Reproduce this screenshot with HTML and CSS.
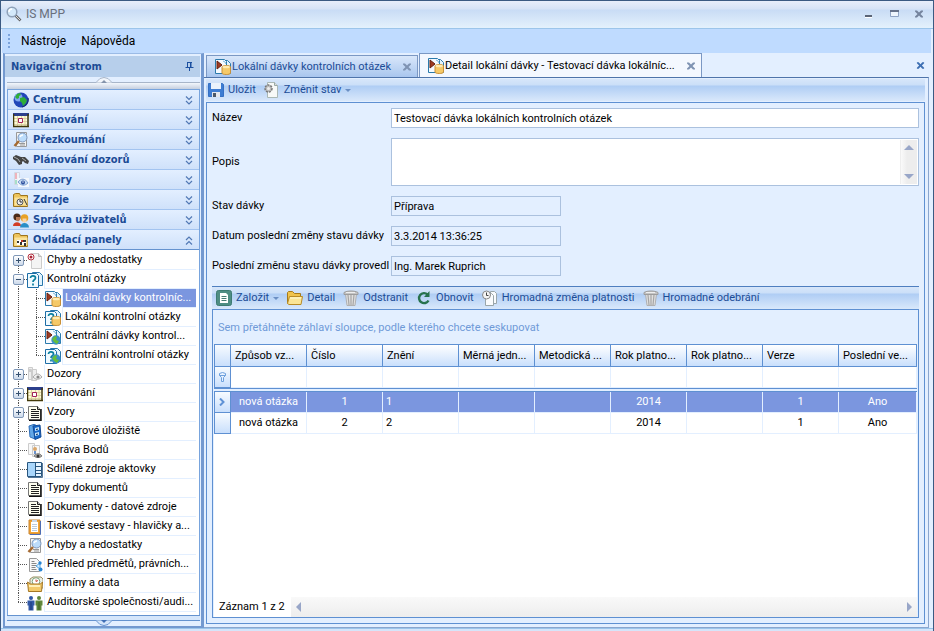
FILE: index.html
```html
<!DOCTYPE html>
<html lang="cs">
<head>
  <meta charset="UTF-8" />
  <meta name="viewport" content="width=device-width, initial-scale=1" />
  <title>IS MPP</title>
  <link rel="stylesheet" href="styles.css">
</head>
<body>
  <!-- Icon set -->
  <svg class="sprite" aria-hidden="true">
    <symbol id="i-search" viewBox="0 0 16 16"><path d="M9.500 9.500l5 5" stroke="#666" stroke-width="2.600"/><path d="M9.500 9.500l4.600 4.600" stroke="#ddd" stroke-width="1"/><circle cx="6" cy="6" r="4.800" fill="#d4e9fa" stroke="#8fa1b8" stroke-width="1.500"/><path d="M3 6a3 3 0 0 1 3-3" stroke="#fff" fill="none" stroke-width="1.500"/></symbol>
    <symbol id="i-globe" viewBox="0 0 16 16"><circle cx="8" cy="8" r="7.500" fill="#2146b8"/><circle cx="5.500" cy="5.500" r="4" fill="#7fa8f0"/><path d="M2 5l2-3 3-1 1 2-2 1 0 2-2 1zM7 6l4-1 3 3-1 3-3 3-1-3-2-2z" fill="#2fae37"/><path d="M9 15a7.500 7.500 0 0 0 6-9" fill="none" stroke="#172a70" stroke-width="1.200"/></symbol>
    <symbol id="i-cal" viewBox="0 0 16 16"><path d="M0 1h16v3H0z" fill="#2c3f8c"/><path d="M1 4h13v10H1z" fill="#fffbd6"/><path d="M1 6.500h13M1 9.500h13M1 12.500h13M4.500 4v10M8.500 4v10M12 4v10" stroke="#d5cc98" stroke-width="0.800"/><path d="M0.500 2v12.500M15 2v13M0 14.500h16" stroke="#423808" stroke-width="1.500"/><path d="M5.500 6.500h4v4h-4z" fill="#fff" stroke="#a22058"/></symbol>
    <symbol id="i-inspect" viewBox="0 0 16 16"><path d="M3.500 0.500h10v14h-10z" fill="#f5f5f5" stroke="#999"/><path d="M6 11.500h6M7 13h5" stroke="#999"/><path d="M6 9l-4.500 5" stroke="#a56a32" stroke-width="2.500"/><circle cx="9.500" cy="5.500" r="4.500" fill="#bcdcfb" stroke="#7f97bb"/><path d="M7 5a3 3 0 0 1 3-2" fill="none" stroke="#fff" stroke-width="1.500"/></symbol>
    <symbol id="i-bino" viewBox="0 0 16 16"><path d="M0 5l3-2 5 2 4 0 4 4-1 3-3-1-2-2-1 1 0 2-3 1-3-4-3-2z" fill="#444"/><path d="M1 5l4 2 2 3M9 6l4 3" stroke="#aaa" stroke-width="1" fill="none"/></symbol>
    <symbol id="i-eye" viewBox="0 0 16 16"><path d="M1.500 0.500h5v12h-5z" fill="#eef2f8" stroke="#d0d8e4"/><path d="M2 1h2v6H2z" fill="#efb3bb"/><path d="M2 8h2v4H2z" fill="#a8dfc8"/><path d="M5 6h11v9H5z" fill="#f4f8fd"/><path d="M5 10c3-4 7-4 10 1-3 3-7 3-10-1z" fill="#c5daf3" stroke="#7f9fd0"/><circle cx="10" cy="10.500" r="2" fill="#2b4f9e"/><circle cx="10" cy="10" r="0.700" fill="#fff"/></symbol>
    <symbol id="i-eyegray" viewBox="0 0 16 16"><path d="M1.500 0.500h4v12h-4zM4.500 2.500h5v11h-5z" fill="#eee" stroke="#ccc"/><path d="M2 2h2v3H2z" fill="#ccc"/><path d="M6 10c3-4 6-4 9 0-3 3-6 3-9 0z" fill="#f0f0f0" stroke="#aaa"/><circle cx="11" cy="10" r="1.600" fill="#888"/></symbol>
    <symbol id="i-folderclk" viewBox="0 0 16 16"><path d="M0.500 14.500v-12l2-1h4l1 2h7v11z" fill="#edc45c" stroke="#9d741d"/><path d="M1.500 13.500v-8h13v8z" fill="#fae39a"/><circle cx="7" cy="10" r="3" fill="#eee" stroke="#555"/><path d="M7 8v2h2M11 7l3 6" stroke="#333" fill="none"/></symbol>
    <symbol id="i-foldertool" viewBox="0 0 16 16"><path d="M0.500 14.500v-12l2-1h4l1 2h7v11z" fill="#edc45c" stroke="#9d741d"/><path d="M1.500 13.500v-8h13v8z" fill="#fae39a"/><path d="M4 8h9v5H4z" fill="#fff"/><path d="M4 9h2v2H4zM7 10h2v3H7zM10 8h3v2h-3zM11 11h2v3h-2z" fill="#333"/><path d="M8 8h2v2H8z" fill="#c03724"/></symbol>
    <symbol id="i-users" viewBox="0 0 16 16"><path d="M0 14c0-5 8-5 8 0z" fill="#d33d25"/><circle cx="4" cy="5" r="3.600" fill="#4b2a17"/><path d="M3 5h4v3l-2 1.500-2-1.500z" fill="#b87850"/><path d="M7 15.500c0-6 9-6 9 0z" fill="#298ec6"/><circle cx="11.500" cy="6" r="3.800" fill="#e8a226"/><path d="M9.500 6.500h4v3l-2 1.500-2-1.500z" fill="#fad3a3"/></symbol>
    <symbol id="i-err" viewBox="0 0 16 16"><path d="M4.500 0.500h7l3 3v12h-10z" fill="#f4f4f4" stroke="#ccc"/><path d="M11.500 0.500v3h3" fill="#ddd" stroke="#bbb"/><circle cx="4" cy="4" r="3" fill="#fff" stroke="#b63342"/><circle cx="4" cy="4" r="1.500" fill="#a92636"/></symbol>
    <symbol id="i-page-q" viewBox="0 0 16 16"><path d="M5.500 0.500h7l3 3v10h-10z" fill="#e2f3fd" stroke="#2877ab"/><path d="M0.500 1.500h9l2 2v12h-11z" fill="#f0faff" stroke="#1d6da6"/><path d="M3.500 6c0-3 5-2.500 5 0 0 2-2.500 1.500-2.500 4M6 11.500v2" fill="none" stroke="#087d9d" stroke-width="1.700"/></symbol>
    <symbol id="i-arrowpage" viewBox="0 0 16 16"><path d="M5.500 1.500h7l3 3v10h-10z" fill="#e2f3fd" stroke="#2b7aac"/><path d="M0.500 0.500h9l2 2v12h-11z" fill="#f5faff" stroke="#2b7aac"/><path d="M8 2l2 1 1 2" fill="none" stroke="#7ab9dc"/><path d="M2 2l5 4-5 4z" fill="#a03a20" stroke="#642010"/></symbol>
    <symbol id="i-db" viewBox="0 0 16 16"><path d="M7 8c0-2 8.500-2 8.500 0v6c0 2-8.500 2-8.500 0z" fill="#f5c968" stroke="#c99038"/><ellipse cx="11.200" cy="8" rx="3.700" ry="1.300" fill="#ffebb1"/></symbol>
    <symbol id="i-miniglobe" viewBox="0 0 16 16"><circle cx="11" cy="11" r="4.700" fill="#3b8fc8"/><path d="M7 10l3-3 2 1-1 3 3 1-2 3-3-2z" fill="#65bf3b"/></symbol>
    <symbol id="i-lokdavka" viewBox="0 0 16 16"><use href="#i-arrowpage"/><use href="#i-db"/></symbol>
    <symbol id="i-lokotazka" viewBox="0 0 16 16"><use href="#i-page-q"/><use href="#i-db"/></symbol>
    <symbol id="i-cendavka" viewBox="0 0 16 16"><use href="#i-arrowpage"/><use href="#i-miniglobe"/></symbol>
    <symbol id="i-cenotazka" viewBox="0 0 16 16"><use href="#i-page-q"/><use href="#i-miniglobe"/></symbol>
    <symbol id="i-doc" viewBox="0 0 16 16"><path d="M1.500 1.500h9l3 3v10h-12z" fill="#fffff0" stroke="#777"/><path d="M14 4v11.500H2" stroke="#111" fill="none" stroke-width="1.500"/><path d="M10.500 1.500v3h3" fill="#bbb" stroke="#222"/><path d="M4 4.500h5M4 6.500h8M4 8.500h8M4 10.500h8M4 12.500h8" stroke="#222"/></symbol>
    <symbol id="i-store" viewBox="0 0 16 16"><path d="M2 2l6-2v15l-5-2z" fill="#62a7e7" stroke="#326fb8"/><path d="M6 2l7-1 1 12-6 2.500z" fill="#1668c9" stroke="#124a96"/><path d="M8 4l4-1v3l-4 1zM8 9l4-1v3l-4 1z" fill="#c8e5fb"/><path d="M9 5.500l2-0.400M9 10.500l2-0.400" stroke="#17355c"/></symbol>
    <symbol id="i-points" viewBox="0 0 16 16"><path d="M1.500 0.500h6v11h-6zM5.500 2.500h7v11h-7z" fill="#f8f8f8" stroke="#ccc"/><circle cx="8" cy="6" r="2" fill="#dba769"/><path d="M7 8h2v3H7z" fill="#6b92ca"/><path d="M7 13c2-3 6-3 8 0-2 2-6 2-8 0z" fill="#aaa" stroke="#777"/><circle cx="11" cy="13" r="1.500" fill="#333"/></symbol>
    <symbol id="i-list" viewBox="0 0 16 16"><path d="M0.500 0.500h14v14H0.500z" fill="#e7f4ff" stroke="#28567f"/><path d="M1 1h7v13H1z" fill="#a9d6fb"/><path d="M8.500 1v13M9 4.500h6M9 8.500h6M9 11.500h6" stroke="#28567f"/><path d="M15.500 1v14.500H1" stroke="#557799" fill="none"/></symbol>
    <symbol id="i-report" viewBox="0 0 16 16"><path d="M2 1h11v14H2z" fill="#f2a333" stroke="#c98530"/><path d="M4 3h7v10H4z" fill="#fff"/><path d="M5 1h5v2H5z" fill="#ccd8e8"/><path d="M5 5.500h5M5 7.500h5M5 9.500h5M5 11.500h5" stroke="#b9cadf"/><path d="M13.500 2v13.500H3" fill="none" stroke="#4d6db4"/></symbol>
    <symbol id="i-law" viewBox="0 0 16 16"><path d="M2.500 1.500h7l3 3v10h-10z" fill="#f8f8f8" stroke="#999"/><path d="M4.500 4.500h3M4.500 6.500h5M4.500 8.500h5M4.500 10.500h4M4.500 12.500h5" stroke="#888"/><path d="M9 9l4-3v6z" fill="#d7edff" stroke="#59a5de"/><circle cx="13" cy="6" r="1.700" fill="#2986d5"/><circle cx="13.500" cy="12.500" r="2" fill="#2986d5"/></symbol>
    <symbol id="i-term" viewBox="0 0 16 16"><path d="M3 3l3-2h8l2 2v9H3z" fill="#e9efe6" stroke="#9b8e61"/><circle cx="9" cy="5.500" r="3.800" fill="#fff" stroke="#7fa47d"/><path d="M9 3.500v2l2-1" stroke="#c34b37" fill="none"/><path d="M0.500 6l3 2h10l2-2-1 9.500h-13z" fill="#f3ca6b" stroke="#a57724"/><path d="M2 10h11" stroke="#fff0b9" stroke-width="2"/></symbol>
    <symbol id="i-people" viewBox="0 0 16 16"><circle cx="4" cy="3" r="2" fill="#3158a6"/><path d="M0.500 5.500h7v5h-1v5h-5v-5h-1z" fill="#3158a6"/><path d="M4 7v8" stroke="#1e3b79"/><circle cx="12" cy="3" r="2" fill="#5f873b"/><path d="M8.500 5.500h7v5h-1v5h-5v-5h-1z" fill="#5f873b"/><path d="M12 7v8" stroke="#3e6024"/></symbol>
    <symbol id="i-save" viewBox="0 0 16 16"><path d="M0.500 1.500h14l1 1v12h-15z" fill="#3d7cd2" stroke="#3570c4"/><path d="M3 1h10v6H3z" fill="#eaf2fc"/><path d="M4 10h8v5H4z" fill="#e3e7ee"/><path d="M5 11h3v4H5z" fill="#4b5869"/></symbol>
    <symbol id="i-state" viewBox="0 0 16 16"><path d="M3.500 0.500h7l3 3v12h-10z" fill="#f7f9f8" stroke="#aab8b5"/><path d="M10.500 0.500v3h3" fill="#ddd" stroke="#99a9a6"/><circle cx="4.500" cy="6.500" r="3.500" fill="#bbb" stroke="#777" stroke-width="1.500" stroke-dasharray="2 1"/><circle cx="4.500" cy="6.500" r="1.500" fill="#eee"/></symbol>
    <symbol id="i-new" viewBox="0 0 16 16"><rect x="0.500" y="0.500" width="15" height="15" rx="2" fill="#4e8d83" stroke="#3d7b72"/><path d="M4 3h6l2 2v8H4z" fill="#fff"/><path d="M5.500 6.500h5M5.500 8.500h5M5.500 10.500h5" stroke="#467c74"/></symbol>
    <symbol id="i-folder" viewBox="0 0 16 16"><path d="M0.500 13.500v-11l1-1h4l2 2h6v3" fill="#f0c34c" stroke="#a67a1b"/><path d="M0.500 13.500l2-7h13l-1.500 8h-12z" fill="#fae596" stroke="#b88b26"/><path d="M3 8h11" stroke="#fffbd8"/></symbol>
    <symbol id="i-trash" viewBox="0 0 16 16"><path d="M2.500 4h11l-1.500 11.500H4z" fill="#e0e0e0" stroke="#b0b0b0"/><path d="M5 5l1 10M8 5v10M11 5l-1 10" stroke="#a5a5a5" stroke-width="1.200"/><path d="M1 2.500c3-2 11-2 14 0v2H1z" fill="#c4c4c4" stroke="#9d9d9d"/><path d="M3 2.500h9" stroke="#eee"/></symbol>
    <symbol id="i-refresh" viewBox="0 0 16 16"><path d="M12.500 10.500a5 5 0 1 1-1-6" fill="none" stroke="#27724d" stroke-width="2.400"/><path d="M13.500 1v6H8z" fill="#27724d"/></symbol>
    <symbol id="i-bulk" viewBox="0 0 16 16"><path d="M8.500 1.500h4l2 2v10h-6z" fill="#f9fbfd" stroke="#9aa6aa"/><path d="M3.500 3.500h6l2 2v10h-8z" fill="#f9fbfd" stroke="#9aa6aa"/><circle cx="4.500" cy="5" r="4" fill="#f4f4f4" stroke="#888"/><path d="M4.500 2.500v3h2" fill="none" stroke="#444"/></symbol>
    <symbol id="i-x" viewBox="0 0 10 10"><path d="M1 1.500h2l2 2 2-2h2v1l-2.500 2.500 2.500 2.500v1h-2l-2-2-2 2h-2v-1l2.500-2.500-2.500-2.500z" fill="currentColor"/></symbol>
    <symbol id="i-chev" viewBox="0 0 8 9"><path d="M1 0.500l3 3 3-3M1 5l3 3 3-3" fill="none" stroke="currentColor" stroke-width="1.200"/></symbol>
  </svg>

  <div class="window">
    <header class="titlebar">
      <svg class="icon"><use href="#i-search"/></svg>
      <h1>IS MPP</h1>
      <div class="winbuttons">
        <button aria-label="Minimalizovat"><svg width="10" height="10"><path d="M1 6h7v2H1z" fill="#5b6577"/><path d="M1 8h7v1H1z" fill="#fff"/></svg></button>
        <button aria-label="Maximalizovat"><svg width="10" height="10"><path d="M1.500 2.500h8v5h-8z" fill="#eef5fd" stroke="#8fa3c4"/><path d="M1 1h9v2H1z" fill="#65718a"/></svg></button>
        <button aria-label="Zavřít"><svg width="10" height="10"><use href="#i-x"/></svg></button>
      </div>
    </header>
    <nav class="menubar">
      <span class="grip"></span>
      <button>Nástroje</button>
      <button>Nápověda</button>
    </nav>

    <div class="workspace">
      <aside class="sidebar">
        <div class="panel-title">
          <h2>Navigační strom</h2>
          <button aria-label="Připnout"><svg width="9" height="9"><path d="M2 0.500h5M2.500 0v5M6 0v5M5.500 0v5M0.500 5.500h8M4.500 5v4" stroke="#1c50a0" fill="none"/></svg></button>
        </div>
        <div class="nav-scroll up"><svg width="20" height="7"><path d="M0 5.500h2l4-4q4-2 8 0l4 4h2" fill="#f2f6fb" stroke="#a7b5c9"/><path d="M7 6l3-3 3 3z" fill="#8494ac"/></svg></div>
        <div class="groups">
          <button class="group"><svg class="icon"><use href="#i-globe"/></svg><span>Centrum</span><svg class="chev"><use href="#i-chev"/></svg></button>
          <button class="group"><svg class="icon"><use href="#i-cal"/></svg><span>Plánování</span><svg class="chev"><use href="#i-chev"/></svg></button>
          <button class="group"><svg class="icon"><use href="#i-inspect"/></svg><span>Přezkoumání</span><svg class="chev"><use href="#i-chev"/></svg></button>
          <button class="group"><svg class="icon"><use href="#i-bino"/></svg><span>Plánování dozorů</span><svg class="chev"><use href="#i-chev"/></svg></button>
          <button class="group"><svg class="icon"><use href="#i-eye"/></svg><span>Dozory</span><svg class="chev"><use href="#i-chev"/></svg></button>
          <button class="group"><svg class="icon"><use href="#i-folderclk"/></svg><span>Zdroje</span><svg class="chev"><use href="#i-chev"/></svg></button>
          <button class="group"><svg class="icon"><use href="#i-users"/></svg><span>Správa uživatelů</span><svg class="chev"><use href="#i-chev"/></svg></button>
          <button class="group open"><svg class="icon"><use href="#i-foldertool"/></svg><span>Ovládací panely</span><svg class="chev"><use href="#i-chev"/></svg></button>
        </div>
        <ul class="tree">
          <li><div class="node"><span class="line first"><button class="exp" aria-label="Rozbalit"></button></span><svg class="icon"><use href="#i-err"/></svg><a href="#">Chyby a nedostatky</a></div></li>
          <li><div class="node"><span class="line"><button class="exp minus" aria-label="Sbalit"></button></span><svg class="icon"><use href="#i-page-q"/></svg><a href="#">Kontrolní otázky</a></div>
            <ul>
              <li><div class="node"><span class="line"></span><svg class="icon"><use href="#i-lokdavka"/></svg><a href="#" class="selected">Lokální dávky kontrolníc...</a></div></li>
              <li><div class="node"><span class="line"></span><svg class="icon"><use href="#i-lokotazka"/></svg><a href="#">Lokální kontrolní otázky</a></div></li>
              <li><div class="node"><span class="line"></span><svg class="icon"><use href="#i-cendavka"/></svg><a href="#">Centrální dávky kontrol...</a></div></li>
              <li><div class="node"><span class="line last"></span><svg class="icon"><use href="#i-cenotazka"/></svg><a href="#">Centrální kontrolní otázky</a></div></li>
            </ul>
          </li>
          <li><div class="node"><span class="line"><button class="exp" aria-label="Rozbalit"></button></span><svg class="icon"><use href="#i-eyegray"/></svg><a href="#">Dozory</a></div></li>
          <li><div class="node"><span class="line"><button class="exp" aria-label="Rozbalit"></button></span><svg class="icon"><use href="#i-cal"/></svg><a href="#">Plánování</a></div></li>
          <li><div class="node"><span class="line"><button class="exp" aria-label="Rozbalit"></button></span><svg class="icon"><use href="#i-doc"/></svg><a href="#">Vzory</a></div></li>
          <li><div class="node"><span class="line"></span><svg class="icon"><use href="#i-store"/></svg><a href="#">Souborové úložiště</a></div></li>
          <li><div class="node"><span class="line"></span><svg class="icon"><use href="#i-points"/></svg><a href="#">Správa Bodů</a></div></li>
          <li><div class="node"><span class="line"></span><svg class="icon"><use href="#i-list"/></svg><a href="#">Sdílené zdroje aktovky</a></div></li>
          <li><div class="node"><span class="line"></span><svg class="icon"><use href="#i-doc"/></svg><a href="#">Typy dokumentů</a></div></li>
          <li><div class="node"><span class="line"></span><svg class="icon"><use href="#i-doc"/></svg><a href="#">Dokumenty - datové zdroje</a></div></li>
          <li><div class="node"><span class="line"></span><svg class="icon"><use href="#i-report"/></svg><a href="#">Tiskové sestavy - hlavičky a...</a></div></li>
          <li><div class="node"><span class="line"></span><svg class="icon"><use href="#i-inspect"/></svg><a href="#">Chyby a nedostatky</a></div></li>
          <li><div class="node"><span class="line"></span><svg class="icon"><use href="#i-law"/></svg><a href="#">Přehled předmětů, právních...</a></div></li>
          <li><div class="node"><span class="line"></span><svg class="icon"><use href="#i-term"/></svg><a href="#">Termíny a data</a></div></li>
          <li><div class="node"><span class="line last"></span><svg class="icon"><use href="#i-people"/></svg><a href="#">Auditorské společnosti/audi...</a></div></li>
        </ul>
        <div class="nav-scroll down"><svg width="20" height="7"><path d="M0 1.500h2l4 4q4 2 8 0l4-4h2" fill="#d4e5fa" stroke="#6593cf"/><path d="M7 1h6l-3 3z" fill="#3f6fb5"/></svg></div>
      </aside>

      <main class="main">
        <div class="tabs">
          <div class="tab"><svg class="icon"><use href="#i-lokdavka"/></svg><button>Lokální dávky kontrolních otázek</button><button class="close" aria-label="Zavřít kartu"><svg width="10" height="10"><use href="#i-x"/></svg></button></div>
          <div class="tab active"><svg class="icon"><use href="#i-lokdavka"/></svg><button>Detail lokální dávky - Testovací dávka lokálníc...</button><button class="close" aria-label="Zavřít kartu"><svg width="10" height="10"><use href="#i-x"/></svg></button></div>
          <button class="close-all" aria-label="Zavřít"><svg width="9" height="9"><use href="#i-x"/></svg></button>
        </div>
        <div class="document">
          <div class="toolbar">
            <button><svg class="icon"><use href="#i-save"/></svg>Uložit</button>
            <button><svg class="icon"><use href="#i-state"/></svg>Změnit stav<i class="caret"></i></button>
          </div>
          <div class="content">
            <form class="form">
              <label for="nazev">Název</label>
              <input type="text" id="nazev" value="Testovací dávka lokálních kontrolních otázek">
              <label for="popis">Popis</label>
              <div class="memo">
                <textarea id="popis"></textarea>
                <div class="vscroll"><i class="arrow-up"></i><i class="arrow-down"></i></div>
              </div>
              <label for="stav">Stav dávky</label>
              <input type="text" id="stav" class="short" value="Příprava" readonly>
              <label for="datum">Datum poslední změny stavu dávky</label>
              <input type="text" id="datum" class="short" value="3.3.2014 13:36:25" readonly>
              <label for="provedl">Poslední změnu stavu dávky provedl</label>
              <input type="text" id="provedl" class="short" value="Ing. Marek Ruprich" readonly>
            </form>

            <div class="toolbar grid-toolbar">
              <button><svg class="icon"><use href="#i-new"/></svg>Založit<i class="caret"></i></button>
              <button><svg class="icon"><use href="#i-folder"/></svg>Detail</button>
              <button><svg class="icon"><use href="#i-trash"/></svg>Odstranit</button>
              <button><svg class="icon"><use href="#i-refresh"/></svg>Obnovit</button>
              <button><svg class="icon"><use href="#i-bulk"/></svg>Hromadná změna platnosti</button>
              <button><svg class="icon"><use href="#i-trash"/></svg>Hromadné odebrání</button>
            </div>
            <div class="grid">
              <p class="group-hint">Sem přetáhněte záhlaví sloupce, podle kterého chcete seskupovat</p>
              <div class="grid-body">
                <table>
                  <thead>
                    <tr>
                      <th class="ind"></th>
                      <th>Způsob vz...</th>
                      <th>Číslo</th>
                      <th>Znění</th>
                      <th>Měrná jedn...</th>
                      <th>Metodická ...</th>
                      <th>Rok platno...</th>
                      <th>Rok platno...</th>
                      <th>Verze</th>
                      <th class="wide">Poslední ve...</th>
                    </tr>
                  </thead>
                  <tbody>
                    <tr class="filter">
                      <td class="ind"><svg width="7" height="10"><path d="M0.500 1.500q3-2 6 0v2l-2 2v4h-2v-4l-2-2zM0.500 3.500h6" fill="#e8f2ff" stroke="#6da0dd"/></svg></td>
                      <td></td><td></td><td></td><td></td><td></td><td></td><td></td><td></td><td></td>
                    </tr>
                    <tr class="divider"><td colspan="10"></td></tr>
                    <tr class="current">
                      <td class="ind"><svg width="6" height="8"><path d="M1 0.500l3.500 3.500-3.500 3.500" fill="none" stroke="#5f92d6" stroke-width="2"/></svg></td>
                      <td class="center">nová otázka</td><td class="center">1</td><td>1</td><td></td><td></td><td class="center">2014</td><td></td><td class="center">1</td><td class="center">Ano</td>
                    </tr>
                    <tr>
                      <td class="ind"></td>
                      <td class="center">nová otázka</td><td class="center">2</td><td>2</td><td></td><td></td><td class="center">2014</td><td></td><td class="center">1</td><td class="center">Ano</td>
                    </tr>
                  </tbody>
                </table>
              </div>
              <div class="grid-footer">
                <span>Záznam 1 z 2</span>
                <div class="hscroll"><i class="arrow-left"></i><i class="arrow-right"></i></div>
              </div>
            </div>
          </div>
        </div>
      </main>
    </div>
    <div class="statusbar"></div>
  </div>
</body>
</html>
```

FILE: styles.css
```css
* {
  box-sizing: border-box;
}
body {
  margin: 0;
  font-family: Roboto, Tahoma, sans-serif;
  font-size: 11px;
  line-height: 14px;
  color: #000;
}
button {
  margin: 0;
  padding: 0;
  border: 0;
  background: none;
  font: inherit;
  color: inherit;
  white-space: nowrap;
}
h1, h2, p, ul {
  margin: 0;
  padding: 0;
  font-size: 11px;
}
.sprite {
  display: none;
}
svg {
  display: block;
  flex: none;
}
.icon {
  width: 16px;
  height: 16px;
}
.window {
  display: flex;
  flex-direction: column;
  height: 100vh;
  border: 1px solid #3b5a82;
  border-bottom: 0;
  background: #e3efff;
}

/* Title bar and menu */
.titlebar {
  display: flex;
  align-items: center;
  gap: 4px;
  height: 28px;
  padding: 0 9px 2px 5px;
  background: linear-gradient(#e8eefa 0, #d6e3f6 8px, #c9dcf5 9px, #e4f1fc 100%);
  border-bottom: 1px solid #9cc5ea;
}
.titlebar h1 {
  font: 12px Roboto, sans-serif;
  color: #69707c;
}
.winbuttons {
  display: flex;
  gap: 15px;
  margin-left: auto;
  color: #75849e;
}
.menubar {
  display: flex;
  align-items: center;
  gap: 15px;
  height: 24px;
  margin: 0 2px 0 1px;
  padding-left: 6px;
  background: #bfdbff;
  font: 12px Roboto, sans-serif;
}
.grip {
  width: 2px;
  height: 14px;
  margin-right: -4px;
  background: repeating-linear-gradient(#7ba3dc 0 2px, transparent 2px 4px);
}
.workspace {
  display: flex;
  flex: 1;
  min-height: 0;
  padding-left: 2px;
}

/* Navigation panel */
.sidebar {
  display: flex;
  flex-direction: column;
  width: 201px;
  padding: 2px 1px 0 2px;
  background: #e3efff;
  border: 2px solid #7399d0;
  border-width: 1px 3px 2px 2px;
  border-top-color: #9bbbe6;
}
.panel-title {
  display: flex;
  flex: none;
  align-items: center;
  justify-content: space-between;
  height: 21px;
  margin-left: -2px;
  padding: 0 6px 0 6px;
  background: #b7cfeb;
  color: #1c4c96;
}
.panel-title h2, .group {
  font-family: "DejaVu Sans Condensed", "DejaVu Sans", Verdana, sans-serif;
  font-weight: bold;
  font-stretch: condensed;
}
.nav-scroll {
  display: flex;
  justify-content: center;
  flex: none;
}
.nav-scroll.up {
  height: 12px;
  background: linear-gradient(transparent 5px, #a7b5c9 5px 6px, #f3f7fc 6px, #c5cfdf 100%);
}
.nav-scroll.down {
  height: 11px;
  background: linear-gradient(#6593cf 1px, #d5e6fb 1px 5px, #6593cf 5px 6px, transparent 6px);
}
.nav-scroll.down svg {
  margin-top: 4px;
}
.groups {
  flex: none;
  border: 1px solid #78a4dd;
  border-bottom: 0;
}
.group {
  display: flex;
  align-items: center;
  gap: 4px;
  width: 100%;
  height: 20px;
  padding: 1px 6px 0 5px;
  background: linear-gradient(#e3efff, #cfe1fa);
  border-bottom: 1px solid #a3c4f0;
  font-size: 11px;
  color: #1c4c96;
}
.group:last-child {
  border-bottom-color: #6593cf;
}
.group .chev {
  width: 8px;
  height: 9px;
  margin-left: auto;
  color: #5279b5;
}
.group.open .chev {
  transform: rotate(180deg);
}
.tree {
  flex: 1;
  padding: 1px 3px 0 6px;
  background: #fff;
  border: 1px solid #78a4dd;
  border-top: 0;
  border-bottom: 0;
}
.tree ul {
  padding-left: 18px;
  background: repeating-linear-gradient(#555 0 1px, transparent 1px 2px) 4px 0 / 1px 100% no-repeat;
}
.tree li {
  list-style: none;
}
.node {
  display: flex;
  align-items: center;
  height: 19px;
}
.line {
  display: flex;
  align-items: center;
  width: 13px;
  height: 19px;
  background:
    repeating-linear-gradient(#555 0 1px, transparent 1px 2px) 4px 0 / 1px 100% no-repeat,
    repeating-linear-gradient(to right, #555 0 1px, transparent 1px 2px) 4px 9px / 9px 1px no-repeat;
}
.line.first {
  background-position: 4px 9px;
}
.line.last {
  background-size: 1px 10px, 9px 1px;
}
.exp {
  width: 11px;
  height: 11px;
  margin-left: -1px;
  border: 1px solid #8098b8;
  border-radius: 2px;
  background:
    linear-gradient(#35506f, #35506f) center / 5px 1px no-repeat,
    linear-gradient(#35506f, #35506f) center / 1px 5px no-repeat,
    linear-gradient(#fff, #ccd9ea);
}
.exp.minus {
  background:
    linear-gradient(#35506f, #35506f) center / 5px 1px no-repeat,
    linear-gradient(#fff, #ccd9ea);
}
.node a {
  flex: 1;
  height: 19px;
  margin-left: 1px;
  padding: 2px 0 0 2px;
  border: solid #e3efff;
  border-width: 0 0 1px 1px;
  color: #000;
  text-decoration: none;
  white-space: nowrap;
  overflow: hidden;
}
.node a.selected {
  background: #7b96df;
  color: #fff;
}

/* Tabs */
.main {
  display: flex;
  flex-direction: column;
  flex: 1;
  min-width: 0;
  padding-right: 4px;
}
.tabs {
  display: flex;
  align-items: flex-end;
  height: 24px;
  padding: 0 4px 0 2px;
}
.tab {
  display: flex;
  align-items: center;
  gap: 1px;
  height: 22px;
  padding: 0 5px 0 8px;
  border: 1px solid #7b98c4;
  border-bottom: 0;
  background: linear-gradient(#d9e7fa, #a9c6ee);
  color: #1c4c96;
}
.tab .close {
  margin-left: 10px;
  color: #7f93b3;
}
.tab.active {
  height: 24px;
  margin-left: 1px;
  background: #f4f8ff;
  color: #000;
}
.close-all {
  align-self: center;
  margin-left: auto;
  color: #3d6fb3;
}
.document {
  display: flex;
  flex-direction: column;
  flex: 1;
  min-height: 0;
  padding: 1px 3px 3px 2px;
  border: 1px solid #8aa6cf;
  border-top-color: #4f74aa;
  border-left: 0;
}
.toolbar {
  display: flex;
  flex: none;
  gap: 8px;
  height: 22px;
  padding-left: 2px;
  background: linear-gradient(#d7e6fa 0, #cbdff8 6px, #afcdf4 7px, #d9e8fb 100%);
  color: #1c4c96;
}
.toolbar button {
  display: flex;
  align-items: center;
  gap: 4px;
}
.caret {
  border: 3px solid transparent;
  border-top-color: #6b8fc4;
  border-bottom: 0;
}
.content {
  display: flex;
  flex-direction: column;
  flex: 1;
  min-height: 0;
  margin-top: 1px;
  padding: 5px;
  border: 1px solid #5e90d2;
}

/* Batch detail form */
.form {
  display: grid;
  grid-template-columns: 174px 1fr;
  gap: 10px 5px;
  align-items: center;
}
.form label {
  white-space: nowrap;
}
.form input {
  width: 100%;
  height: 20px;
  padding: 0 2px;
  border: 1px solid #abc1de;
  background: #fff;
  font: inherit;
}
.form .short {
  width: 170px;
  background: #e3efff;
}
.memo {
  display: flex;
  height: 48px;
  padding: 1px;
  background: #fff;
  border: 1px solid #abc1de;
}
.memo textarea {
  flex: 1;
  border: 0;
  padding: 0;
  resize: none;
  font: inherit;
  overflow: hidden;
}
.vscroll {
  display: flex;
  flex-direction: column;
  align-items: center;
  justify-content: space-between;
  width: 17px;
  padding: 5px 0;
  background: linear-gradient(to right, #fafafa, #ededed 6px);
  border-left: 1px solid #eee;
}
.arrow-up, .arrow-down, .arrow-left, .arrow-right {
  border: 5px solid transparent;
}
.arrow-up {
  border-bottom-color: #98a6c8;
  border-top: 0;
}
.arrow-down {
  border-top-color: #98a6c8;
  border-bottom: 0;
}
.arrow-left {
  border-right-color: #98a6c8;
  border-left: 0;
}
.arrow-right {
  border-left-color: #98a6c8;
  border-right: 0;
}

/* Questions grid */
.grid-toolbar {
  height: 23px;
  margin-top: 10px;
  padding-left: 4px;
  border-top: 1px solid #4f7fc0;
}
.grid {
  display: flex;
  flex-direction: column;
  flex: 1;
  min-height: 0;
  padding: 0 1px;
  border: 1px solid #5e90d2;
}
.group-hint {
  padding: 11px 4px 9px;
  color: #6f9ad8;
}
.grid-body {
  flex: 1;
  background: #fff;
}
table {
  width: 100%;
  table-layout: fixed;
  border-collapse: separate;
  border-spacing: 0;
}
th, td {
  height: 21px;
  padding: 0 3px;
  border: solid #e3efff;
  border-width: 0 1px 1px 0;
  text-align: left;
  font-weight: normal;
  white-space: nowrap;
  overflow: hidden;
}
th {
  height: 23px;
  padding: 0 4px;
  border-color: #5e90d2;
  border-top-width: 1px;
  background: linear-gradient(#fff, #c9dffc);
}
.ind {
  width: 17px;
  padding: 0 4px;
  border-color: #5e90d2;
  border-left-width: 1px;
  background: linear-gradient(#f7fbff, #c9dffc);
}
.wide {
  width: 78px;
}
.divider td {
  height: 4px;
  padding: 0;
  border: solid #5e90d2;
  border-width: 1px 0;
  background: #e3efff;
}
.center {
  text-align: center;
}
.current td:not(.ind) {
  background: #7b96df;
  color: #fff;
}
.grid-footer {
  display: flex;
  align-items: center;
  gap: 6px;
  height: 20px;
  padding-left: 5px;
  background: #fff;
}
.hscroll {
  display: flex;
  align-items: center;
  justify-content: space-between;
  flex: 1;
  height: 20px;
  padding: 0 5px;
  background: linear-gradient(#f9f9f9, #ededed);
}
.statusbar {
  height: 3px;
  background: #d5e5fa;
  border-top: 1px solid #9cc5ea;
}
```
